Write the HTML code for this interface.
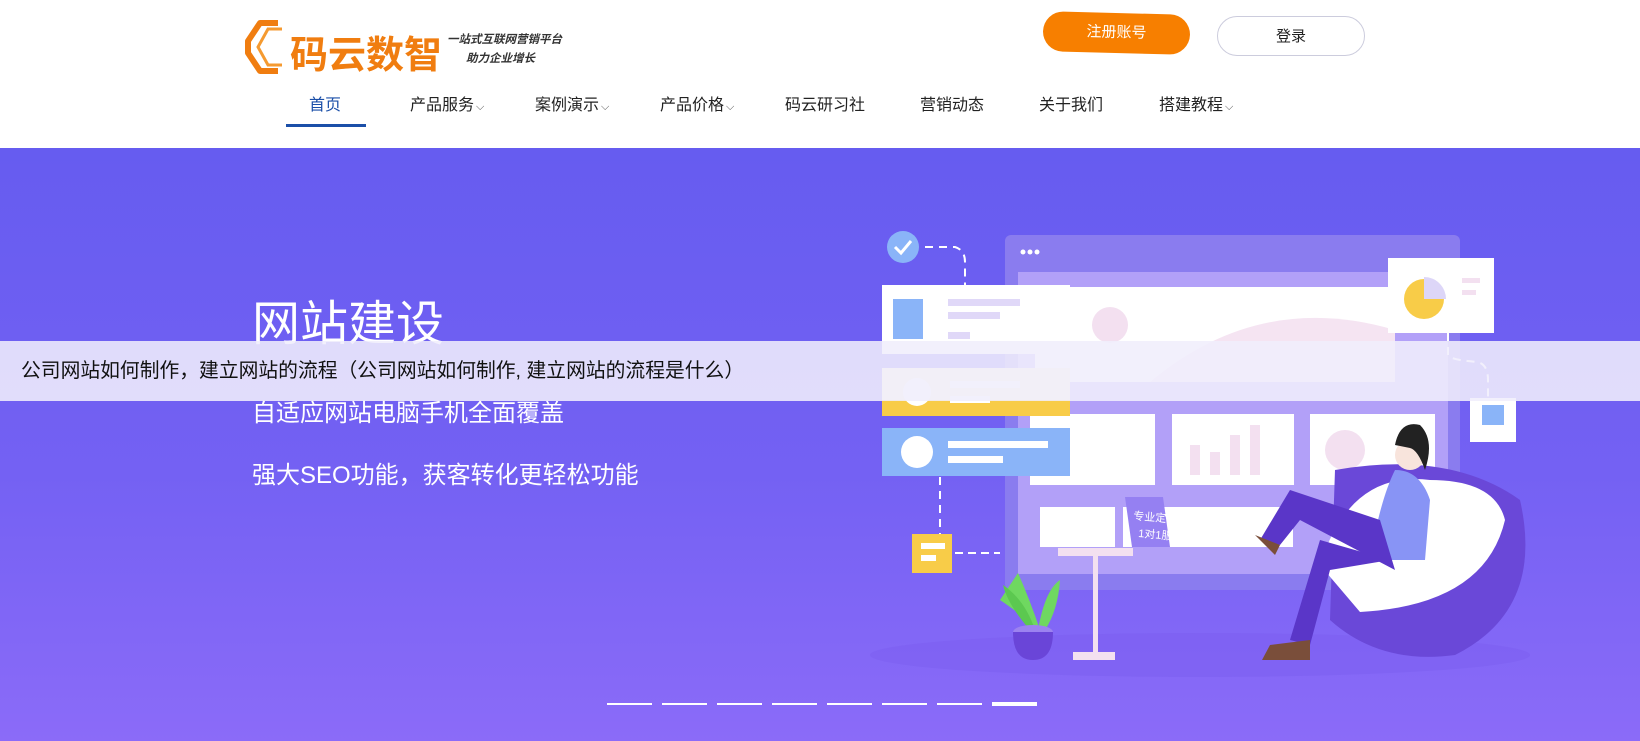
<!DOCTYPE html>
<html><head><meta charset="utf-8">
<style>
*{margin:0;padding:0;box-sizing:border-box}
html,body{width:1640px;height:741px;overflow:hidden;background:#fff;font-family:"Liberation Sans","Noto Sans CJK SC",sans-serif}
.hdr{position:absolute;left:0;top:0;width:1640px;height:148px;background:#fff}
.nav a{position:absolute;top:91px;font-size:16px;color:#222;text-decoration:none;white-space:nowrap}
.nav a.on{color:#1b4fa8}
.car{font-size:11px;color:#555;margin-left:2px}
.btn{position:absolute;height:40px;border-radius:20px;font-size:15px;text-align:center;line-height:40px}
.banner{position:absolute;left:0;top:148px;width:1640px;height:593px;background:linear-gradient(180deg,#665cf0 0%,#7461f3 55%,#8b6bf8 100%);overflow:hidden}
.strip{position:absolute;left:0;top:341px;width:1640px;height:60px;background:rgba(240,238,252,0.88);font-size:19.8px;color:#111;line-height:60px;padding-left:21px}
.dots{position:absolute;top:703px;left:607px}
.dots i{position:absolute;top:0;width:45px;height:2px;background:#fff}
</style></head><body>
<div class="hdr">
  <svg style="position:absolute;left:244px;top:19px" width="44" height="56" viewBox="0 0 44 56">
    <path d="M34 4 L16 4 L4 22 L4 34 L16 52 L34 52" fill="none" stroke="#f07d10" stroke-width="6" stroke-linejoin="round"/>
    <path d="M38 10 L24 10 L14 28 L24 46 L38 46" fill="none" stroke="#f59a30" stroke-width="3"/>
  </svg>
  <div style="position:absolute;left:290px;top:24px;font-size:38px;font-weight:bold;color:#f07d10;letter-spacing:0px">码云数智</div>
  <div style="position:absolute;left:447px;top:31px;font-size:11.5px;font-weight:bold;color:#333;font-style:italic">一站式互联网营销平台</div>
  <div style="position:absolute;left:466px;top:50px;font-size:11.5px;font-weight:bold;color:#333;font-style:italic">助力企业增长</div>
  <div class="btn" style="left:1043px;top:13px;width:147px;background:#f77f00;color:#fff;transform:rotate(1.5deg)">注册账号</div>
  <div class="btn" style="left:1217px;top:16px;width:148px;border:1px solid #ccd;color:#222;height:40px">登录</div>
  <div class="nav">
    <a class="on" style="left:309px">首页</a>
    <a style="left:410px">产品服务<span class="car">⌵</span></a>
    <a style="left:535px">案例演示<span class="car">⌵</span></a>
    <a style="left:660px">产品价格<span class="car">⌵</span></a>
    <a style="left:785px">码云研习社</a>
    <a style="left:920px">营销动态</a>
    <a style="left:1039px">关于我们</a>
    <a style="left:1159px">搭建教程<span class="car">⌵</span></a>
  </div>
  <div style="position:absolute;left:286px;top:124px;width:80px;height:3px;background:#1b4fa8"></div>
</div>
<div class="banner">
  <svg style="position:absolute;left:0;top:0" width="1640" height="593" viewBox="0 148 1640 593">
    <ellipse cx="1200" cy="655" rx="330" ry="22" fill="#7c5ef0" opacity=".5"/>
    <rect x="1005" y="235" width="455" height="355" rx="6" fill="#8a7cef"/>
    <circle cx="1023" cy="252" r="2.5" fill="#fff"/><circle cx="1030" cy="252" r="2.5" fill="#fff"/><circle cx="1037" cy="252" r="2.5" fill="#fff"/>
    <rect x="1018" y="272" width="430" height="302" fill="#b2a0f8"/>
    <rect x="1035" y="287" width="360" height="95" fill="#fff"/>
    <circle cx="1110" cy="325" r="18" fill="#f3e0f0"/>
    <path d="M1150 382 Q1260 290 1395 330 L1395 382Z" fill="#f5e4f2"/>
    <rect x="1030" y="414" width="125" height="71" fill="#fff"/>
    <rect x="1172" y="414" width="122" height="71" fill="#fff"/>
    <rect x="1310" y="414" width="125" height="71" fill="#fff"/>
    <rect x="1190" y="445" width="10" height="30" fill="#f3e0f0"/><rect x="1210" y="452" width="10" height="23" fill="#f3e0f0"/><rect x="1230" y="435" width="10" height="40" fill="#f3e0f0"/><rect x="1250" y="425" width="10" height="50" fill="#f3e0f0"/>
    <circle cx="1345" cy="450" r="20" fill="#f3e0f0"/>
    <rect x="1040" y="507" width="75" height="40" fill="#fff"/>
    <rect x="1123" y="507" width="170" height="40" fill="#fff"/>
    <rect x="882" y="285" width="188" height="69" fill="#fff"/>
    <rect x="893" y="299" width="30" height="40" fill="#8ab4f8"/>
    <rect x="948" y="299" width="72" height="7" fill="#e0d8f8"/><rect x="948" y="312" width="52" height="7" fill="#e0d8f8"/><rect x="948" y="332" width="22" height="7" fill="#e0d8f8"/>
    <rect x="882" y="368" width="188" height="48" fill="#f8cc48"/>
    <rect x="882" y="368" width="188" height="32" fill="#fdf3d4"/>
    <circle cx="917" cy="392" r="14" fill="#fff"/>
    <rect x="950" y="381" width="70" height="7" fill="#fff"/><rect x="950" y="396" width="40" height="7" fill="#fff"/>
    <rect x="882" y="428" width="188" height="48" fill="#8ab4f8"/>
    <circle cx="917" cy="452" r="16" fill="#fff"/>
    <rect x="948" y="441" width="100" height="7" fill="#fff"/><rect x="948" y="456" width="55" height="7" fill="#fff"/>
    <circle cx="903" cy="247" r="16" fill="#8ab4f8"/>
    <path d="M895 247 L901 253 L911 241" stroke="#fff" stroke-width="3" fill="none"/>
    <path d="M925 247 H955 Q965 250 965 262 V285" stroke="#fff" stroke-width="2" stroke-dasharray="8 6" fill="none"/>
    <path d="M940 477 V534" stroke="#fff" stroke-width="2" stroke-dasharray="8 6" fill="none"/>
    <rect x="912" y="534" width="40" height="39" fill="#f8cc48"/>
    <rect x="921" y="543" width="24" height="6" fill="#fff"/><rect x="921" y="555" width="15" height="6" fill="#fff"/>
    <path d="M955 553 H1000" stroke="#fff" stroke-width="2" stroke-dasharray="8 5"/>
    <rect x="1388" y="258" width="106" height="75" fill="#fff"/>
    <circle cx="1424" cy="299" r="20" fill="#f8cc48"/>
    <path d="M1424 299 V277 A22 22 0 0 1 1446 299Z" fill="#ddd6f8"/>
    <rect x="1462" y="278" width="18" height="5" fill="#f3e0f0"/><rect x="1462" y="290" width="14" height="5" fill="#f3e0f0"/>
    <path d="M1448 333 V355 Q1450 360 1478 362 Q1488 365 1488 380 V398" stroke="#fff" stroke-width="2" stroke-dasharray="8 6" fill="none"/>
    <rect x="1470" y="398" width="46" height="44" fill="#fff"/>
    <rect x="1482" y="405" width="22" height="20" fill="#8ab4f8"/>
    <path d="M1125 497 L1163 497 L1170 547 L1132 547Z" fill="#9580f2"/>
    <text x="1133" y="520" font-size="11" fill="#fff" font-family="Liberation Sans,Noto Sans CJK SC,sans-serif" transform="rotate(5 1140 520)">专业定制</text>
    <text x="1138" y="537" font-size="11" fill="#fff" font-family="Liberation Sans,Noto Sans CJK SC,sans-serif" transform="rotate(5 1140 537)">1对1服务</text>
    <rect x="1058" y="548" width="75" height="8" fill="#f3e0f0"/>
    <rect x="1093" y="556" width="5" height="98" fill="#f3e0f0"/>
    <rect x="1073" y="652" width="42" height="8" fill="#f3e0f0"/>
    <path d="M1018 573 Q1030 600 1040 630 Q1015 610 1000 600Z" fill="#6fd860"/>
    <path d="M1038 630 Q1045 590 1060 580 Q1058 610 1045 630Z" fill="#6fd860"/>
    <path d="M1030 630 Q1008 605 1003 585 Q1025 600 1035 630Z" fill="#5cc850"/>
    <ellipse cx="1033" cy="632" rx="20" ry="7" fill="#9c82f0"/>
    <path d="M1013 632 Q1013 660 1033 660 Q1053 660 1053 632Z" fill="#6a45d8"/>
    <path d="M1335 470 Q1450 450 1520 500 Q1545 610 1455 655 Q1380 665 1330 620Z" fill="#6a48d8"/>
    <path d="M1320 565 Q1350 470 1430 480 Q1495 480 1505 520 Q1485 605 1360 612Z" fill="#fff"/>
    <path d="M1395 470 Q1420 470 1430 500 L1425 560 L1370 560 Q1380 500 1395 470Z" fill="#8894f5"/>
    <path d="M1380 520 L1290 490 L1260 540 L1280 545 L1300 520 L1395 570Z" fill="#5a36c8"/>
    <path d="M1390 560 L1320 540 L1290 640 L1310 645 L1330 570 Z" fill="#5a36c8"/>
    <path d="M1255 535 L1280 545 L1275 555Z" fill="#7a4e3a"/>
    <path d="M1270 645 L1310 640 L1310 660 L1262 660Z" fill="#7a4e3a"/>
    <circle cx="1410" cy="455" r="15" fill="#f8e4dc"/>
    <path d="M1395 445 Q1400 420 1420 425 Q1435 440 1425 470 Q1418 450 1410 448Z" fill="#222"/>
  </svg>
  <div style="position:absolute;left:252px;top:136px;font-size:48px;color:#fff">网站建设</div>
  <div style="position:absolute;left:252px;top:245px;font-size:24px;color:#fff">自适应网站电脑手机全面覆盖</div>
  <div style="position:absolute;left:252px;top:307px;font-size:24px;color:#fff">强大SEO功能，获客转化更轻松功能</div>
</div>
<div class="strip">公司网站如何制作，建立网站的流程（公司网站如何制作, 建立网站的流程是什么）</div>
<div class="dots">
  <i style="left:0"></i><i style="left:55px"></i><i style="left:110px"></i><i style="left:165px"></i><i style="left:220px"></i><i style="left:275px"></i><i style="left:330px"></i><i style="left:385px;height:4px;top:-1px"></i>
</div>
</body></html>
